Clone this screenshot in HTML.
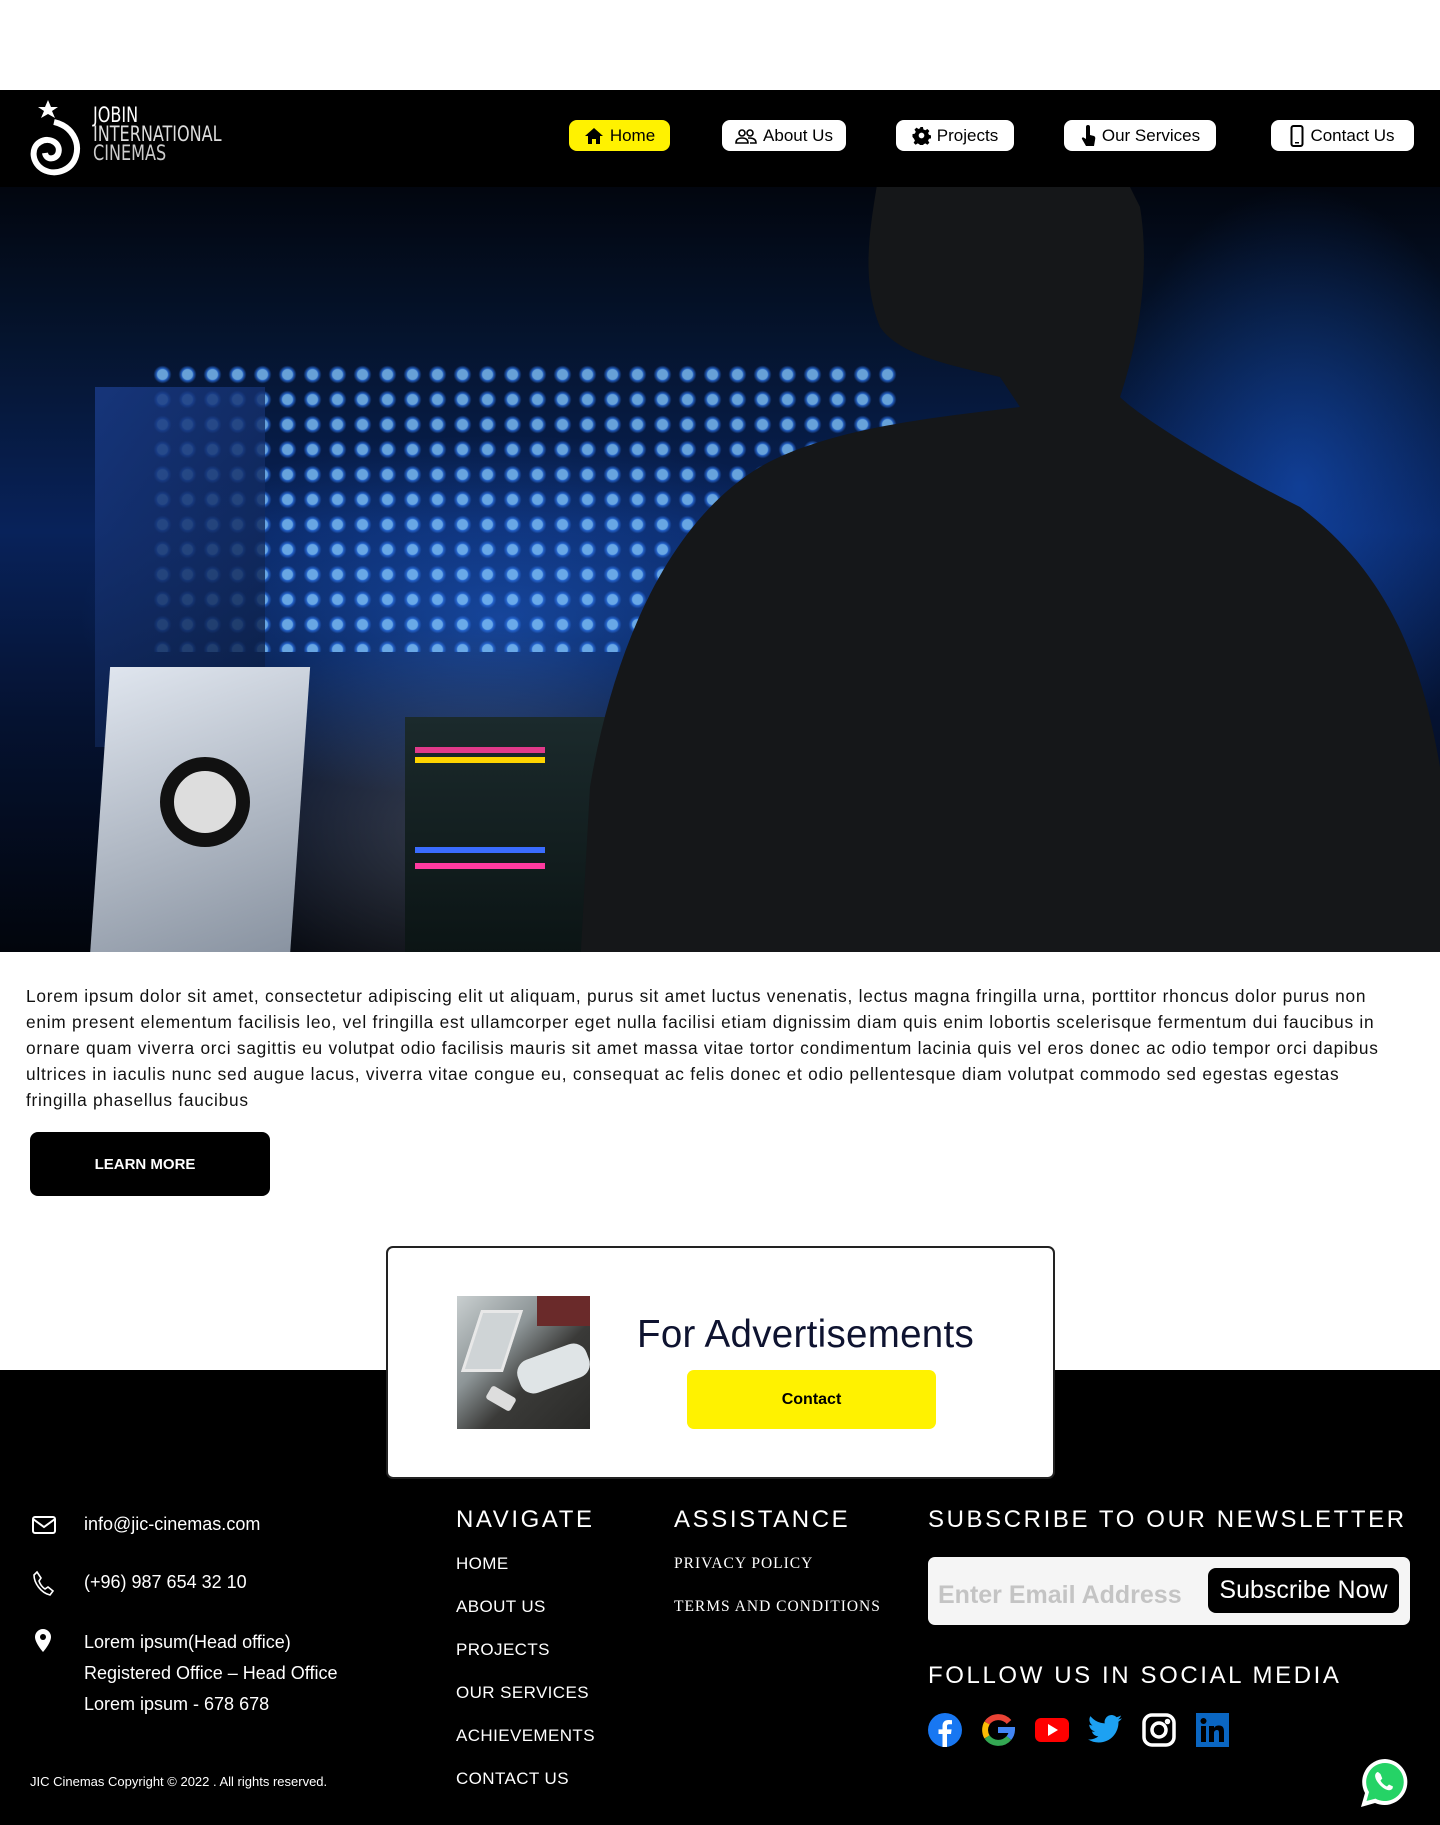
<!DOCTYPE html>
<html><head><meta charset="utf-8"><style>
*{margin:0;padding:0;box-sizing:border-box}
body{width:1440px;height:1825px;background:#fff;font-family:"Liberation Sans",sans-serif;position:relative;overflow:hidden}
.abs{position:absolute}
header{position:absolute;left:0;top:90px;width:1440px;height:97px;background:#000}
.nav{position:absolute;top:30px;height:31px;border-radius:8px;background:#fff;color:#000;font-size:17px;display:flex;align-items:center;justify-content:center;gap:6px}
.hero{position:absolute;left:0;top:187px;width:1440px;height:765px;overflow:hidden;
background:
radial-gradient(ellipse 300px 200px at 470px 640px,rgba(255,255,255,.2),transparent),
radial-gradient(ellipse 600px 260px at 500px 430px,rgba(40,120,255,.45),transparent 70%),
radial-gradient(ellipse 200px 300px at 1300px 300px,rgba(30,110,255,.4),transparent),
linear-gradient(180deg,#02060f 0%,#05142e 20%,#08225a 45%,#051230 70%,#02050c 100%)}
.dots{position:absolute;left:150px;top:175px;width:750px;height:290px;
background:radial-gradient(circle at 50% 50%,#7fc4ff 0 5px,#2a6fe0 6px,transparent 9px);background-size:25px 25px;opacity:.8}
.man{position:absolute;left:580px;top:-20px;width:880px;height:800px}
footer{position:absolute;left:0;top:1370px;width:1440px;height:455px;background:#000}
.fh{position:absolute;color:#fff;font-size:24px;letter-spacing:2.6px}
.fl{position:absolute;color:#fff;font-size:17px;letter-spacing:.4px}
.ci{position:absolute;color:#fff;font-size:18px}
</style></head><body>
<header>
  <svg class="abs" style="left:28px;top:8px" width="62" height="80" viewBox="0 0 62 80">
    <polygon points="20,2 23,9 30,9 24,13 27,20 20,16 13,20 16,13 10,9 17,9" fill="#fff"/>
    <path d="M26 24 C44 28 52 44 48 58 C44 72 28 78 16 72 C4 66 2 50 12 44 C22 38 34 46 30 56 C27 62 18 62 17 55" fill="none" stroke="#fff" stroke-width="6"/>
  </svg>
  <div class="abs" style="left:93px;top:16px;color:#fff;font-family:'DejaVu Sans Condensed','Liberation Sans Narrow',sans-serif;font-size:21px;line-height:19px;transform:scaleX(.85);transform-origin:left">JOBIN<br><span style="color:#ddd">INTERNATIONAL</span><br><span style="color:#ccc">CINEMAS</span></div>
  <div class="nav" style="left:569px;width:101px;background:#fff200"><svg width="20" height="18" viewBox="0 0 20 18"><path d="M10 1 L19 9 H16 V17 H12 V12 H8 V17 H4 V9 H1Z"/></svg>Home</div>
  <div class="nav" style="left:722px;width:124px"><svg width="22" height="16" viewBox="0 0 22 16" fill="none" stroke="#000" stroke-width="1.6"><circle cx="7" cy="5" r="3"/><circle cx="15" cy="5" r="3"/><path d="M1 15c0-4 3-5 6-5s6 1 6 5zM13 10c3 0 8 0 8 5h-6"/></svg>About Us</div>
  <div class="nav" style="left:896px;width:118px"><svg width="19" height="19" viewBox="0 0 20 20"><path d="M8.5 1h3l.5 2.5 2 1 2.2-1.4 2.1 2.1-1.4 2.2 1 2 2.5.5v3l-2.5.5-1 2 1.4 2.2-2.1 2.1-2.2-1.4-2 1-.5 2.5h-3l-.5-2.5-2-1-2.2 1.4-2.1-2.1 1.4-2.2-1-2L.5 11.5v-3L3 8l1-2-1.4-2.2 2.1-2.1L6.9 3.1l2-1z"/><circle cx="10" cy="10" r="3" fill="#fff"/></svg>Projects</div>
  <div class="nav" style="left:1064px;width:152px"><svg width="16" height="22" viewBox="0 0 16 22"><path d="M6 2a2 2 0 014 0v8l4 1c1 .5 1.5 1.5 1.2 3L14 21H6L2 14c-.5-1 .5-2 1.5-1.5L6 14z"/></svg>Our Services</div>
  <div class="nav" style="left:1271px;width:143px"><svg width="14" height="22" viewBox="0 0 14 22"><rect x="1.5" y="1" width="11" height="20" rx="2" fill="none" stroke="#000" stroke-width="2"/><rect x="5" y="17" width="4" height="1.5"/></svg>Contact Us</div>
</header>
<div class="hero">
  <div class="dots"></div>
  <div class="abs" style="left:95px;top:200px;width:170px;height:360px;background:linear-gradient(135deg,#1a3c8a,#0a1a3a);opacity:.8"></div>
  <div class="abs" style="left:100px;top:480px;width:200px;height:290px;background:linear-gradient(160deg,#dfe5ee,#8892a0);transform:skewX(-4deg)"></div>
  <div class="abs" style="left:160px;top:570px;width:90px;height:90px;border-radius:50%;border:14px solid #111;background:#ddd"></div>
  <div class="abs" style="left:405px;top:530px;width:210px;height:240px;background:linear-gradient(180deg,#1b2a2c,#0b1414)"></div>
  <div class="abs" style="left:415px;top:560px;width:130px;height:6px;background:#e03a8a;box-shadow:0 10px 0 #ffd400,0 100px 0 #3a6cff,0 116px 0 #ff3aa0"></div>
  <svg class="man" viewBox="0 0 880 800"><path d="M300 0 C290 60 280 110 300 160 C320 190 380 200 420 210 L440 240 C360 250 250 260 180 300 C80 360 30 500 10 620 L0 800 L880 800 L860 600 C840 480 800 400 720 340 C640 300 560 250 540 230 C560 170 570 100 560 40 L540 0Z" fill="#151719"/></svg>
</div>
<p class="abs" style="left:26px;top:983px;width:1375px;font-size:17.3px;line-height:26px;color:#111;letter-spacing:.75px">Lorem ipsum dolor sit amet, consectetur adipiscing elit ut aliquam, purus sit amet luctus venenatis, lectus magna fringilla urna, porttitor rhoncus dolor purus non enim present elementum facilisis leo, vel fringilla est ullamcorper eget nulla facilisi etiam dignissim diam quis enim lobortis scelerisque fermentum dui faucibus in ornare quam viverra orci sagittis eu volutpat odio facilisis mauris sit amet massa vitae tortor condimentum lacinia quis vel eros donec ac odio tempor orci dapibus ultrices in iaculis nunc sed augue lacus, viverra vitae congue eu, consequat ac felis donec et odio pellentesque diam volutpat commodo sed egestas egestas fringilla phasellus faucibus</p>
<div class="abs" style="left:30px;top:1132px;width:240px;height:64px;background:#000;border-radius:8px;color:#fff;font-weight:bold;font-size:15px;display:flex;align-items:center;justify-content:center;padding-right:10px">LEARN MORE</div>
<footer></footer>
<div class="abs" style="left:386px;top:1246px;width:669px;height:233px;background:#fff;border:2px solid #222;border-radius:7px"></div>
<div class="abs" style="left:457px;top:1296px;width:133px;height:133px;background:linear-gradient(135deg,#c9cfd0 0%,#8d9597 35%,#3a3a38 60%,#2a2a28 100%);overflow:hidden">
  <div class="abs" style="left:14px;top:14px;width:42px;height:62px;background:#cfd4d6;transform:skewX(-18deg);border:3px solid #e8e8e8"></div>
  <div class="abs" style="left:60px;top:55px;width:73px;height:35px;background:#dfe4e6;border-radius:14px;transform:rotate(-20deg)"></div>
  <div class="abs" style="left:30px;top:95px;width:28px;height:15px;background:#ddd;border-radius:3px;transform:rotate(30deg)"></div>
  <div class="abs" style="left:80px;top:0;width:53px;height:30px;background:#6a2a2a"></div>
</div>
<div class="abs" style="left:637px;top:1313px;font-size:38.5px;color:#0e1330;letter-spacing:.3px">For Advertisements</div>
<div class="abs" style="left:687px;top:1370px;width:249px;height:59px;background:#fff200;border-radius:7px;font-weight:bold;font-size:16px;display:flex;align-items:center;justify-content:center">Contact</div>

<svg class="abs" style="left:31px;top:1515px" width="26" height="20" viewBox="0 0 26 20" fill="none" stroke="#fff" stroke-width="2"><rect x="2" y="2" width="22" height="16" rx="2"/><path d="M2 4l11 8 11-8"/></svg>
<div class="ci" style="left:84px;top:1514px">info@jic-cinemas.com</div>
<svg class="abs" style="left:32px;top:1570px" width="22" height="26" viewBox="0 0 22 26" fill="none" stroke="#fff" stroke-width="1.6"><path d="M5 2l4 6-2 3c1 3 3 6 6 8l3-2 5 4-3 4C9 23 2 13 2 5z"/></svg>
<div class="ci" style="left:84px;top:1572px">(+96) 987 654 32 10</div>
<svg class="abs" style="left:35px;top:1629px" width="16" height="23" viewBox="0 0 16 23"><path d="M8 0a8 8 0 00-8 8c0 6 8 15 8 15s8-9 8-15a8 8 0 00-8-8z" fill="#fff"/><circle cx="8" cy="8" r="3" fill="#000"/></svg>
<div class="ci" style="left:84px;top:1627px;line-height:31px">Lorem ipsum(Head office)<br>Registered Office – Head Office<br>Lorem ipsum - 678 678</div>
<div class="abs" style="left:30px;top:1774px;color:#fff;font-size:13px">JIC Cinemas Copyright © 2022 . All rights reserved.</div>

<div class="fh" style="left:456px;top:1506px">NAVIGATE</div>
<div class="fl" style="left:456px;top:1542px;line-height:43px">HOME<br>ABOUT US<br>PROJECTS<br>OUR SERVICES<br>ACHIEVEMENTS<br>CONTACT US</div>
<div class="fh" style="left:674px;top:1506px">ASSISTANCE</div>
<div class="fl" style="left:674px;top:1542px;line-height:43px;font-family:'Liberation Serif',serif;font-size:15.5px;letter-spacing:1px">PRIVACY POLICY<br>TERMS AND CONDITIONS</div>
<div class="fh" style="left:928px;top:1506px">SUBSCRIBE TO OUR NEWSLETTER</div>
<div class="abs" style="left:928px;top:1557px;width:482px;height:68px;background:#f5f5f5;border-radius:7px"></div>
<div class="abs" style="left:938px;top:1581px;color:#c4c4c4;font-size:25px;font-weight:bold">Enter Email Address</div>
<div class="abs" style="left:1208px;top:1568px;width:191px;height:45px;background:#000;border-radius:8px;color:#fff;font-size:25px;display:flex;align-items:center;justify-content:center">Subscribe Now</div>
<div class="fh" style="left:928px;top:1662px">FOLLOW US IN SOCIAL MEDIA</div>

<svg class="abs" style="left:928px;top:1713px" width="34" height="34" viewBox="0 0 34 34"><circle cx="17" cy="17" r="17" fill="#1877f2"/><path d="M19 34V21h4l.6-4.6H19v-3c0-1.3.4-2.2 2.3-2.2H24V7.2c-.5 0-1.9-.2-3.6-.2-3.5 0-5.9 2.1-5.9 6v3.4h-4V21h4v13z" fill="#fff"/></svg>
<svg class="abs" style="left:981px;top:1713px" width="34" height="34" viewBox="0 0 34 34" fill="none" stroke-width="6"><path d="M28 9A14 14 0 0 0 6 10" stroke="#ea4335"/><path d="M6 10a14 14 0 0 0 0 14" stroke="#fbbc05"/><path d="M6 24a14 14 0 0 0 22 1" stroke="#34a853"/><path d="M28 25a14 14 0 0 0 3-8H17" stroke="#4285f4"/></svg>
<svg class="abs" style="left:1035px;top:1715px" width="34" height="30" viewBox="0 0 34 30"><rect x="0" y="3" width="34" height="24" rx="6" fill="#ff0000"/><path d="M13 9v12l10-6z" fill="#fff"/></svg>
<svg class="abs" style="left:1088px;top:1714px" width="34" height="30" viewBox="0 0 24 20"><path d="M24 2.4a10 10 0 01-2.8.8A5 5 0 0023.3.5a10 10 0 01-3.1 1.2A4.9 4.9 0 0011.8 6 14 14 0 011.7.9a4.9 4.9 0 001.5 6.6A4.9 4.9 0 01.9 6.9a4.9 4.9 0 004 4.8 5 5 0 01-2.2.1 4.9 4.9 0 004.6 3.4A9.900 9.900 0 010 17.3 14 14 0 007.5 19.5c9.1 0 14-7.5 14-14v-.6A10 10 0 0024 2.4z" fill="#1da1f2"/></svg>
<svg class="abs" style="left:1142px;top:1713px" width="34" height="34" viewBox="0 0 34 34" fill="none" stroke="#fff" stroke-width="3.5"><rect x="2" y="2" width="30" height="30" rx="8"/><circle cx="17" cy="17" r="7"/><circle cx="25.5" cy="8.5" r="1" fill="#fff"/></svg>
<svg class="abs" style="left:1196px;top:1713px" width="33" height="34" viewBox="0 0 33 34"><rect width="33" height="34" fill="#0a66c2"/><rect x="5" y="13" width="5" height="16" fill="#000"/><circle cx="7.5" cy="8" r="3" fill="#000"/><path d="M13 13h5v2c1-2 3-2.5 5-2.5 4 0 5 2.5 5 6V29h-5v-9c0-2-.5-3-2-3s-3 1-3 3v9h-5z" fill="#000"/></svg>
<svg class="abs" style="left:1359px;top:1757px" width="52" height="52" viewBox="0 0 52 52"><path d="M26 2a23 23 0 00-20 34L2 50l14-4A23 23 0 1026 2z" fill="#fff"/><path d="M26 6a19 19 0 00-16 29l-2.5 9 9-2.4A19 19 0 1026 6z" fill="#25d366"/><path d="M19 15c-1 0-2 1-2.5 2-1 2 0 5 2 8s6 7 10 8c2 .5 4 0 5-1.5l.5-2-4-2-2 2c-2-1-5-3-6.5-6l1.8-2-1.8-4.5z" fill="#fff"/></svg>
</body></html>
